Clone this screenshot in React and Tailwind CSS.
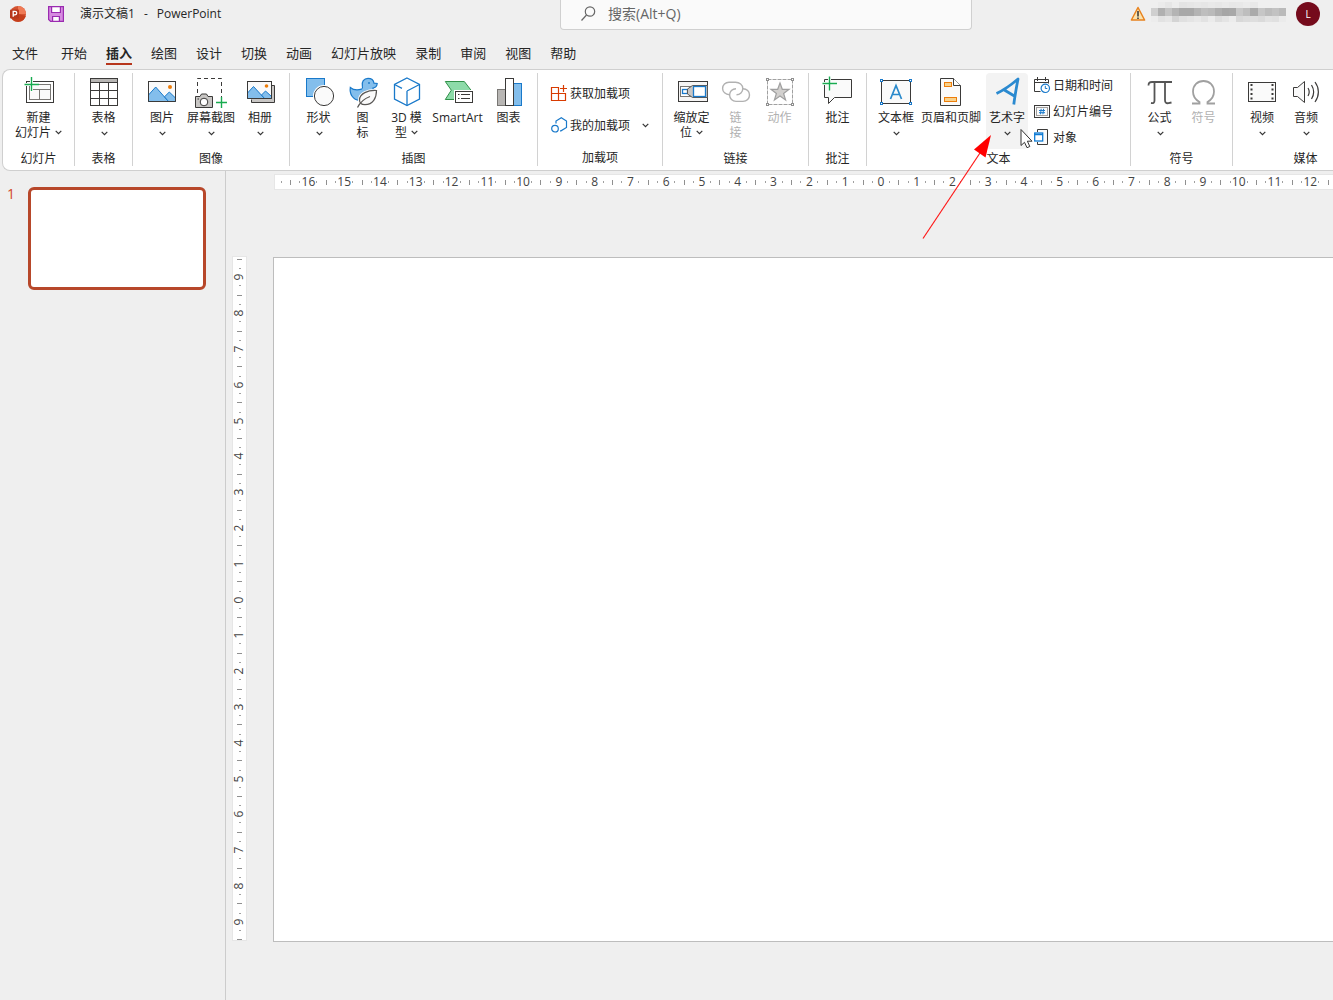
import React from "react";

const INK = "#3b3a39";
const BLUE = "#1979ca";
const SKY = "#83beec";
const GREEN = "#18ab50";
const GREY = "#b1b1b1";

function Icon({ children, size = 32 }) {
  return (
    <svg
      width={size}
      height={size}
      viewBox={`0 0 ${size} ${size}`}
      fill="none"
      stroke={INK}
      strokeWidth="1"
      className="shrink-0 overflow-visible"
      aria-hidden="true"
    >
      {children}
    </svg>
  );
}

function Chevron() {
  return (
    <svg width="7" height="5" viewBox="0 0 7 5" fill="none" stroke="#333" strokeWidth="1.2" className="shrink-0" aria-hidden="true">
      <path d="M0.7 0.8 L3.5 3.6 L6.3 0.8" />
    </svg>
  );
}

const Mountains = () => (
  <>
    <path d="M2.5 19 L9.7 11 L22.5 25.5 H2.5 Z" fill={SKY} stroke={BLUE} />
    <path d="M18.5 20.8 L23.3 16 L29.5 22 V25.5 H22.5 Z" fill={SKY} stroke={BLUE} />
  </>
);

const icons = {
  newSlide: (
    <Icon>
      <rect x="3.5" y="5.5" width="27" height="21" fill="#fff" />
      <rect x="6.5" y="8.5" width="21" height="15" stroke="#797774" fill="#fafafa" />
      <path d="M6.5 13.5 H27.5 M16.5 13.5 V23.5" stroke="#797774" />
      <path d="M0.5 8.5 H16 M8.5 1 V16" stroke="#fff" strokeWidth="3" />
      <path d="M1.5 8.5 H16 M8.5 1 V15" stroke={GREEN} strokeWidth="1.4" />
    </Icon>
  ),
  table: (
    <Icon>
      <rect x="2.5" y="2.5" width="27" height="27" fill="#fff" />
      <rect x="2.5" y="2.5" width="27" height="4" fill="#b8b6b4" />
      <path d="M2.5 14.5 H29.5 M2.5 22.5 H29.5 M11.5 6.5 V29.5 M20.5 6.5 V29.5" />
    </Icon>
  ),
  picture: (
    <Icon>
      <rect x="2.5" y="5.5" width="27" height="20" fill="#fafafa" />
      <Mountains />
      <path d="M2.5 5.5 V25.5 H29.5 V5.5 Z" />
      <circle cx="24" cy="11" r="2" fill="#ed7d0a" stroke="none" />
    </Icon>
  ),
  screenshot: (
    <Icon>
      <path d="M2.5 17 V2.5 H26.5 V21" strokeDasharray="4 3" />
      <path d="M0.5 20.5 H5 L6.5 18 H11.5 L13 20.5 H17.5 V31.5 H0.5 Z" fill="#c8c6c4" />
      <circle cx="9" cy="26" r="3.8" fill="#fff" />
      <path d="M2.5 23 H4" />
      <path d="M21 26.5 H32 M26.5 21 V32" stroke={GREEN} strokeWidth="1.4" />
    </Icon>
  ),
  album: (
    <Icon>
      <path d="M27.5 9.5 H30.5 V26.5 H7.5 V23.5" fill="#c8c6c4" />
      <rect x="3.5" y="5.5" width="24" height="17" fill="#fafafa" />
      <path d="M3.5 17 L9.5 10.5 L20.5 22.5 H3.5 Z" fill={SKY} stroke={BLUE} />
      <path d="M17.5 19 L21.5 15 L27.5 20.5 V22.5 H20.5 Z" fill={SKY} stroke={BLUE} />
      <path d="M3.5 5.5 V22.5 H27.5 V5.5 Z" />
      <circle cx="22.5" cy="10" r="1.8" fill="#ed7d0a" stroke="none" />
    </Icon>
  ),
  shapes: (
    <Icon>
      <rect x="3.5" y="2.5" width="18" height="18" fill={SKY} stroke={BLUE} />
      <circle cx="21" cy="20" r="11" fill="#fff" stroke="none" />
      <circle cx="21" cy="20" r="9.6" fill="#fafafa" />
    </Icon>
  ),
  symbols: (
    <Icon>
      <path
        d="M3.3 11.5 C6 13.8 10 14.5 14.5 13.2 C16 12.6 15.8 11.8 15.4 10.5 C14.2 6 17 2.3 21 2.3 C24.3 2.3 26.6 4.4 27 7.2 L30.2 7.5 C30 10.3 28.5 11.6 26 12 C27.5 18 25 24.5 17.5 24.5 H12.5 C6 24 2.3 18 3.3 11.5 Z"
        fill={SKY}
        stroke={BLUE}
        strokeWidth="1.2"
      />
      <circle cx="22" cy="7" r="0.9" fill={BLUE} stroke="none" />
      <path d="M29.5 14.5 C21 14 12.5 17.5 12.5 24 C12.5 27 14.5 28.7 18 28.7 C26 28.7 29.5 22 29.5 14.5 Z" fill="#fff" stroke="#fff" strokeWidth="3" />
      <path d="M29.5 14.5 C21 14 12.5 17.5 12.5 24 C12.5 27 14.5 28.7 18 28.7 C26 28.7 29.5 22 29.5 14.5 Z" fill="#fafafa" stroke="#5a5856" strokeWidth="1.2" />
      <path d="M10.5 31.5 C13 26.5 17.5 22.5 23 20.5" stroke="#5a5856" strokeWidth="1.3" />
    </Icon>
  ),
  cube: (
    <Icon>
      <g stroke={BLUE} strokeWidth="1.3">
        <path d="M16 2 L28.5 8.5 V23 L16 29.5 L3.5 23 V8.5 Z" fill="#fff" />
        <path d="M3.5 8.5 L11 12.3 M16 15 L28.5 8.5 M16 15 V29.5" />
      </g>
    </Icon>
  ),
  smartArt: (
    <Icon>
      <path d="M3.3 5.5 H22.3 L29 14.2 L22.3 23.5 H3.3 L9.3 14.2 Z" fill="#8ddba9" stroke="#309048" />
      <rect x="12" y="14" width="20" height="14" fill="#fff" stroke="none" />
      <rect x="13.5" y="15.5" width="17" height="11" fill="#fff" />
      <path d="M16 18.5 H17.5 M19 18.5 H28 M16 22.5 H17.5 M19 22.5 H28" />
    </Icon>
  ),
  chart: (
    <Icon>
      <rect x="4.5" y="13.5" width="8" height="16" fill="#b8b6b4" stroke="#797774" />
      <rect x="20.5" y="7.5" width="8" height="22" fill={SKY} stroke={BLUE} />
      <rect x="12.5" y="2.5" width="8" height="27" fill="#fff" />
    </Icon>
  ),
  zoom: (
    <Icon>
      <rect x="2.5" y="5.5" width="29" height="20" fill="#f6f5f4" />
      <rect x="4.5" y="10.5" width="10" height="10" fill="#fff" stroke="#797774" />
      <rect x="6.5" y="13.5" width="5" height="4" fill="#fff" stroke={BLUE} strokeWidth="1.3" />
      <path d="M11.5 13 L16.5 9.5 H31.5 V21.5 H16.5 L11.5 18 Z" fill="#c8c6c4" stroke="#5a5856" />
      <rect x="17.5" y="10.5" width="12" height="10" fill="#fff" stroke={BLUE} strokeWidth="1.3" />
    </Icon>
  ),
  link: (
    <Icon>
      <g stroke={GREY} strokeWidth="1.4">
        <path d="M9.5 18.7 C5.5 18.7 2.6 15.8 2.6 12.5 C2.6 9 5.4 6.3 9 6.3 H15.5 C19.5 6.3 22.8 9 22.8 12.5 C22.8 16 20 18.7 16.5 18.7" />
        <path d="M16 12.8 C12.3 12.8 9.6 15.5 9.6 19 C9.6 22.6 12.5 25.4 16 25.4 H23 C26.8 25.4 29.5 22.6 29.5 19 C29.5 15.5 26.8 12.8 23 12.8" />
      </g>
    </Icon>
  ),
  action: (
    <Icon>
      <rect x="3.5" y="3.5" width="25" height="25" stroke="#a0a0a0" strokeDasharray="4 1" />
      <g fill="#fff" stroke="#8f8f8f">
        <rect x="2.5" y="2.5" width="2" height="2" />
        <rect x="27.5" y="2.5" width="2" height="2" />
        <rect x="2.5" y="27.5" width="2" height="2" />
        <rect x="27.5" y="27.5" width="2" height="2" />
      </g>
      <path d="M16 7 L18.3 13.3 H25 L19.6 17.4 L21.6 24 L16 20 L10.4 24 L12.4 17.4 L7 13.3 H13.7 Z" fill="#d2d0ce" stroke="#a0a0a0" strokeWidth="1.2" />
    </Icon>
  ),
  comment: (
    <Icon>
      <path d="M2.5 3.5 H29.5 V21.5 H12.5 L6.5 27.5 V21.5 H2.5 Z" fill="#fafafa" />
      <path d="M-0.5 7.5 H15 M7.5 0 V15" stroke="#fff" strokeWidth="3" />
      <path d="M0.5 7.5 H15 M7.5 0.5 V14.5" stroke={GREEN} strokeWidth="1.4" />
    </Icon>
  ),
  textBox: (
    <Icon>
      <rect x="1.5" y="4.5" width="29" height="23" fill="#fafafa" />
      <g fill="#fff" stroke={BLUE}>
        <rect x="0.5" y="3.5" width="2" height="2" />
        <rect x="29.5" y="3.5" width="2" height="2" />
        <rect x="0.5" y="26.5" width="2" height="2" />
        <rect x="29.5" y="26.5" width="2" height="2" />
      </g>
      <path d="M10.5 23 L16 9.5 L21.5 23 M12.5 18.5 H19.5" stroke="#2b8acb" strokeWidth="1.7" />
    </Icon>
  ),
  headerFooter: (
    <Icon>
      <path d="M5.5 2.5 H18.5 L25.5 9.5 V29.5 H5.5 Z" fill="#fafafa" />
      <path d="M18.5 2.5 V9.5 H25.5" fill="#fff" />
      <rect x="9.5" y="6.5" width="7" height="4" fill="#f8d18b" stroke="#ed7d0a" />
      <rect x="9.5" y="21.5" width="12" height="4" fill="#f8d18b" stroke="#ed7d0a" />
    </Icon>
  ),
  wordArt: (
    <Icon>
      <path d="M5.5 17.5 C12 14.5 20 9 27 3 C25.5 11 23.8 20 22.8 28.5 M12.5 13.5 L24.2 20.5" stroke="#2b8ad0" strokeWidth="2.8" strokeLinejoin="round" />
    </Icon>
  ),
  equation: (
    <Icon>
      <path d="M4.5 9.5 C4.5 7 5.5 6 8 6 H28 M10.5 6 V24.5 C10.5 26.5 9.5 27.5 7 27 M21 6 V24 C21 26.5 22 27.5 24.5 27.2 L27.5 26.5" strokeWidth="1.8" stroke="#555" />
    </Icon>
  ),
  omega: (
    <Icon>
      <path d="M4 27.5 H11.5 V26 C7 23.5 5 20 5 15.5 C5 9 9.5 5 15.5 5 C21.5 5 26 9 26 15.5 C26 20 24 23.5 19.5 26 V27.5 H27" stroke="#a0a0a0" strokeWidth="1.8" />
    </Icon>
  ),
  video: (
    <Icon>
      <rect x="2.5" y="6.5" width="27" height="19" fill="#fafafa" />
      <path d="M5.5 8 V25 M26.5 8 V25" strokeWidth="2" strokeDasharray="2 2.5" />
    </Icon>
  ),
  audio: (
    <Icon>
      <path d="M3.5 11.5 H7.5 L14.5 5.5 V26.5 L7.5 20.5 H3.5 Z" fill="#fafafa" />
      <path d="M18 12 C19.5 14.5 19.5 17.5 18 20 M21.5 9 C24.3 13.5 24.3 18.5 21.5 23 M25 6 C29.5 12 29.5 20 25 26" strokeWidth="1.2" />
    </Icon>
  ),
  store: (
    <Icon size={16}>
      <path d="M0.5 2.5 H7.5 V15.5 H0.5 Z M0.5 8.5 H14.5 V15.5 H7.5 M12.5 0 V7 M9 3.5 H16" stroke="#d83b01" strokeWidth="1.2" />
    </Icon>
  ),
  myAddins: (
    <Icon size={16}>
      <path d="M5 6.5 V4 L10.3 0.8 L15.5 4 V10.5 L10 13.8 H9" stroke={BLUE} strokeWidth="1.2" />
      <circle cx="4" cy="11.7" r="3.3" stroke={BLUE} strokeWidth="1.2" />
    </Icon>
  ),
  dateTime: (
    <Icon size={16}>
      <path d="M6.5 14.5 H0.5 V2.5 H14.5 V6.5 M0.5 5.5 H14.5 M3.5 0 V4 M11.5 0 V4" />
      <circle cx="11.3" cy="11.3" r="4.2" fill="#fff" stroke={BLUE} strokeWidth="1.2" />
      <path d="M11.3 8.8 V11.5 H13.3" stroke={BLUE} />
    </Icon>
  ),
  slideNumber: (
    <Icon size={16}>
      <rect x="0.5" y="2.5" width="15" height="12" fill="#fafafa" />
      <rect x="2.5" y="4.5" width="11" height="8" stroke="#a19f9d" />
      <path d="M7.2 5.8 L6.5 11.3 M9.6 5.8 L8.9 11.3 M5 7.5 H11 M5 9.7 H11" stroke={BLUE} />
    </Icon>
  ),
  object: (
    <Icon size={16}>
      <path d="M3.5 3 V0.5 H13.5 V15.5 H3.5 V13" fill="#fafafa" />
      <rect x="0.7" y="4" width="8" height="8" fill="#fff" stroke="#0f7bd4" strokeWidth="1.3" />
      <path d="M0.5 5.5 H9" stroke="#0f7bd4" strokeWidth="1.3" />
    </Icon>
  ),
};

function BigButton({ icon, lines, arrow, width = "w-11", active, disabled }) {
  return (
    <button
      type="button"
      disabled={disabled}
      className={`flex h-[76px] shrink-0 flex-col items-center rounded-sm pt-[3px] ${width} ${active ? "bg-[#f3f3f3]" : ""} ${disabled ? "text-[#b1b1b1]" : ""}`}
    >
      {icon}
      <span className="mt-[2px] flex flex-col items-center whitespace-nowrap leading-[15px]">
        {lines.map((line, i) => (
          <span key={line} className="flex items-center gap-1">
            {line}
            {arrow === "inline" && i === lines.length - 1 && <Chevron />}
          </span>
        ))}
        {arrow === "below" && (
          <span className="flex h-4 items-center pl-[2px]">
            <Chevron />
          </span>
        )}
      </span>
    </button>
  );
}

function SmallButton({ icon, label, arrow }) {
  return (
    <button type="button" className="flex h-6 items-center gap-[3px] whitespace-nowrap leading-[15px]">
      {icon}
      <span>{label}</span>
      {arrow && (
        <span className="ml-[9px]">
          <Chevron />
        </span>
      )}
    </button>
  );
}

function Group({ label, width, last, align = "justify-center", children }) {
  return (
    <section aria-label={label} className={`flex shrink-0 flex-col ${width} ${last ? "" : "border-r border-[#d2d2d2]"}`}>
      <div className={`flex h-[76px] ${align}`}>{children}</div>
      <div className="mt-[2px] text-center leading-4">{label}</div>
    </section>
  );
}

const tabs = ["文件", "开始", "插入", "绘图", "设计", "切换", "动画", "幻灯片放映", "录制", "审阅", "视图", "帮助"];

const range = (n) => Array.from({ length: 2 * n + 1 }, (_, i) => Math.abs(i - n));

function HorizontalRuler() {
  return (
    <div className="ml-[49px] mt-1 flex h-[14px] bg-white text-[12px] text-[#444] outline outline-[#e6e6e6]">
      <div className="flex w-[15px] shrink-0 items-center pl-[6px]">
        <span className="h-[2px] w-px bg-[#a0a0a0]" />
      </div>
      <div className="flex w-[1181px] shrink-0">
        {range(16).map((n, i) => (
          <div key={i} className="flex flex-1 items-center">
            <span className="h-[5px] w-px bg-[#909090]" />
            <span className="flex-1" />
            <span className="h-[2px] w-px bg-[#a0a0a0]" />
            <span className="w-4 text-center leading-[18px]">{n}</span>
            <span className="h-[2px] w-px bg-[#a0a0a0]" />
            <span className="flex-1" />
          </div>
        ))}
      </div>
    </div>
  );
}

function VerticalRuler() {
  return (
    <div className="mb-[2px] ml-[7px] mr-[27px] flex w-[13px] shrink-0 flex-col bg-white pt-[2px] text-[12px] text-[#444] outline outline-[#e6e6e6]">
      {range(9).map((n, i) => (
        <div key={i} className="flex flex-1 flex-col items-center">
          <span className="h-px w-[5px] bg-[#909090]" />
          <span className="flex-1" />
          <span className="h-px w-[2px] bg-[#a0a0a0]" />
          <span className="flex h-4 -rotate-90 items-center leading-[18px]">{n}</span>
          <span className="h-px w-[2px] bg-[#a0a0a0]" />
          <span className="flex-1" />
        </div>
      ))}
      <span className="h-px w-[5px] self-center bg-[#909090]" />
    </div>
  );
}

const mosaicTop = ["#efefef", "#ebebeb", "#e6e6e6", "#ededed", "#e4e4e4", "#e6e6e6", "#e8e8e8", "#e6e6e6", "#e9e9e9", "#e7e7e7", "#eaeaea", "#e7e7e7", "#e8e8e8", "#ebebeb", "#e8e8e8", "#efefef", "#efefef", "#efefef", "#efefef"];
const mosaicMid = ["#cfcfcf", "#b0b0b0", "#c4c4c4", "#b4b4b4", "#a8a8a8", "#a8a8a8", "#b4b4b4", "#bebebe", "#bababa", "#aeaeae", "#a6a6a6", "#a8a8a8", "#c8c8c8", "#bebebe", "#aaaaaa", "#c6c6c6", "#bcbcbc", "#c2c2c2", "#bababa"];
const mosaicLow = ["#ececec", "#e2e2e2", "#e6e6e6", "#d4d4d4", "#e0e0e0", "#e4e4e4", "#e8e8e8", "#e2e2e2", "#ebebeb", "#dedede", "#e4e4e4", "#ececec", "#d8d8d8", "#dcdcdc", "#dedede", "#dadada", "#e2e2e2", "#e0e0e0", "#ebebeb"];

function Mosaic() {
  return (
    <svg width="135" height="24" viewBox="0 0 135 24" aria-hidden="true" shapeRendering="crispEdges">
      {mosaicTop.map((c, i) => (
        <rect key={i} x={i * 7.1} y="0" width="7.2" height="6" fill={c} />
      ))}
      {mosaicMid.map((c, i) => (
        <rect key={i} x={i * 7.1} y="6" width="7.2" height="8" fill={c} />
      ))}
      {mosaicLow.map((c, i) => (
        <rect key={i} x={i * 7.1} y="14" width="7.2" height="6" fill={c} />
      ))}
    </svg>
  );
}

function TitleBar() {
  return (
    <header className="flex h-[30px] items-start">
      <div className="flex h-7 w-[560px] shrink-0 items-center pl-[9px] text-[12px]">
        <svg width="18" height="18" viewBox="0 0 18 18" aria-hidden="true">
          <circle cx="9" cy="9" r="8" fill="#d35230" />
          <path d="M9 1 A8 8 0 0 1 17 9 H9 Z" fill="#ef7a55" />
          <path d="M1.5 11 A8 8 0 0 0 16.8 11 L9 9 Z" fill="#c43e1c" />
          <rect x="1" y="4.5" width="9" height="9" rx="1" fill="#b7371b" />
          <path d="M4.2 11.8 V6.3 H6 A1.7 1.7 0 0 1 6 9.8 H4.2" fill="none" stroke="#fff" strokeWidth="1.3" />
        </svg>
        <button type="button" aria-label="保存" className="ml-[21px]">
          <svg width="16" height="16" viewBox="0 0 16 16" fill="none" stroke="#9a2bb0" strokeWidth="1.2" aria-hidden="true">
            <path d="M0.6 0.6 H15.4 V15.4 H2.6 L0.6 13.4 Z" fill="#d68be0" />
            <path d="M3.6 0.6 H12.4 V6.5 H3.6 Z" fill="#fff" />
            <path d="M4.6 15.4 V10.5 H11.4 V15.4 Z" fill="#fff" />
          </svg>
        </button>
        <h1 className="ml-4 flex gap-[9px] whitespace-nowrap">
          <span>演示文稿1</span>
          <span>-</span>
          <span>PowerPoint</span>
        </h1>
      </div>
      <label className="flex h-[30px] w-[412px] shrink-0 items-center rounded-b border border-t-0 border-[#d0d0d0] bg-[#fafafa] pb-[2px] pl-5">
        <svg width="15" height="15" viewBox="0 0 15 15" fill="none" stroke="#666" strokeWidth="1.2" aria-hidden="true">
          <circle cx="9" cy="5.5" r="4.7" />
          <path d="M5.5 9 L0.5 14.5" />
        </svg>
        <input
          type="text"
          aria-label="搜索"
          placeholder="搜索(Alt+Q)"
          className="ml-3 min-w-0 flex-1 bg-transparent text-[14px] outline-none placeholder:text-[#666]"
        />
      </label>
      <div className="flex h-7 flex-1 items-center justify-end pr-[13px]">
        <svg width="16" height="16" viewBox="0 0 16 16" aria-hidden="true">
          <path d="M8 1.5 L14.6 14 H1.4 Z" fill="#fbe3ae" stroke="#e8831f" strokeWidth="1.5" strokeLinejoin="round" />
          <path d="M8 5 V10.5 M8 11.5 V13" stroke="#333" strokeWidth="1.5" />
        </svg>
        <div className="ml-[5px] mr-[10px]">
          <Mosaic />
        </div>
        <button type="button" className="h-6 w-6 rounded-full bg-[#750b1c] text-[10px] text-white">
          L
        </button>
      </div>
    </header>
  );
}

function Ribbon() {
  return (
    <div className="ml-[2px] flex h-[102px] shrink-0 overflow-hidden rounded-l-lg border border-r-0 border-[#cfcfcf] bg-white pt-[3px] pb-1 text-[12px]">
      <Group label="幻灯片" width="w-[72px]">
        <BigButton icon={icons.newSlide} lines={["新建", "幻灯片"]} arrow="inline" width="w-14" />
      </Group>
      <Group label="表格" width="w-[58px]">
        <BigButton icon={icons.table} lines={["表格"]} arrow="below" />
      </Group>
      <Group label="图像" width="w-[157px]">
        <BigButton icon={icons.picture} lines={["图片"]} arrow="below" />
        <BigButton icon={icons.screenshot} lines={["屏幕截图"]} arrow="below" width="w-[54px]" />
        <BigButton icon={icons.album} lines={["相册"]} arrow="below" />
      </Group>
      <Group label="插图" width="w-[248px]">
        <BigButton icon={icons.shapes} lines={["形状"]} arrow="below" />
        <BigButton icon={icons.symbols} lines={["图", "标"]} />
        <BigButton icon={icons.cube} lines={["3D 模", "型"]} arrow="inline" />
        <BigButton icon={icons.smartArt} lines={["SmartArt"]} width="w-[58px]" />
        <BigButton icon={icons.chart} lines={["图表"]} />
      </Group>
      <Group label="加载项" width="w-[125px]">
        <div className="flex flex-col gap-2 pt-2">
          <SmallButton icon={icons.store} label="获取加载项" />
          <SmallButton icon={icons.myAddins} label="我的加载项" arrow />
        </div>
      </Group>
      <Group label="链接" width="w-[146px]">
        <BigButton icon={icons.zoom} lines={["缩放定", "位"]} arrow="inline" />
        <BigButton icon={icons.link} lines={["链", "接"]} disabled />
        <BigButton icon={icons.action} lines={["动作"]} disabled />
      </Group>
      <Group label="批注" width="w-[58px]">
        <BigButton icon={icons.comment} lines={["批注"]} />
      </Group>
      <Group label="文本" width="w-[264px]" align="pl-[5px]">
        <BigButton icon={icons.textBox} lines={["文本框"]} arrow="below" width="w-12" />
        <BigButton icon={icons.headerFooter} lines={["页眉和页脚"]} width="w-[62px]" />
        <div className="pl-1 pr-[6px]">
          <BigButton icon={icons.wordArt} lines={["艺术字"]} arrow="below" width="w-[42px]" active />
        </div>
        <div className="flex flex-col gap-[2px]">
          <SmallButton icon={icons.dateTime} label="日期和时间" />
          <SmallButton icon={icons.slideNumber} label="幻灯片编号" />
          <SmallButton icon={icons.object} label="对象" />
        </div>
      </Group>
      <Group label="符号" width="w-[102px]">
        <BigButton icon={icons.equation} lines={["公式"]} arrow="below" />
        <BigButton icon={icons.omega} lines={["符号"]} disabled />
      </Group>
      <Group label="媒体" width="w-[145px]" align="pl-[7px]" last>
        <BigButton icon={icons.video} lines={["视频"]} arrow="below" />
        <BigButton icon={icons.audio} lines={["音频"]} arrow="below" />
      </Group>
    </div>
  );
}

export default function App() {
  return (
    <div className="relative flex min-h-screen flex-col overflow-hidden bg-[#efefef] font-['Open_Sans','Noto_Sans_CJK_SC',sans-serif] text-[#262626]">
      <TitleBar />
      <nav className="flex h-[39px] items-start gap-[19px] pl-3 pt-[13px] text-[13px] leading-5">
        {tabs.map((tab, i) => (
          <button
            key={tab}
            type="button"
            className={`whitespace-nowrap border-b-2 ${i === 0 ? "mr-1" : ""} ${tab === "插入" ? "border-[#b7361c] font-bold" : "border-transparent"}`}
          >
            {tab}
          </button>
        ))}
      </nav>
      <Ribbon />
      <main className="flex flex-1">
        <aside className="flex w-[226px] shrink-0 items-start border-r border-[#cccccc] pl-[7px] pt-4">
          <span className="w-[21px] text-[14px] leading-[14px] text-[#d24726]">1</span>
          <button type="button" aria-label="幻灯片 1" className="h-[103px] w-[178px] rounded-md border-[3px] border-[#b7472a] bg-white" />
        </aside>
        <div className="flex min-w-0 flex-1 flex-col">
          <HorizontalRuler />
          <div className="mb-[58px] mt-[68px] flex flex-1">
            <VerticalRuler />
            <div className="flex-1 border border-r-0 border-[#bdbdbd] bg-white" />
          </div>
        </div>
      </main>
      <svg width="120" height="120" viewBox="0 0 120 120" className="pointer-events-none absolute left-[920px] top-[125px]" aria-hidden="true">
        <path d="M3 113.5 L62 25" stroke="#ff1a1a" strokeWidth="1.2" />
        <path d="M71 10 L54 24.5 L65.5 32.5 Z" fill="#ff0000" />
        <path d="M101 4.5 V20.5 L104.5 17.3 L107 22.7 L109.8 21.5 L107.4 16.2 H112 Z" fill="#fff" stroke="#333" strokeWidth="1" />
      </svg>
    </div>
  );
}
